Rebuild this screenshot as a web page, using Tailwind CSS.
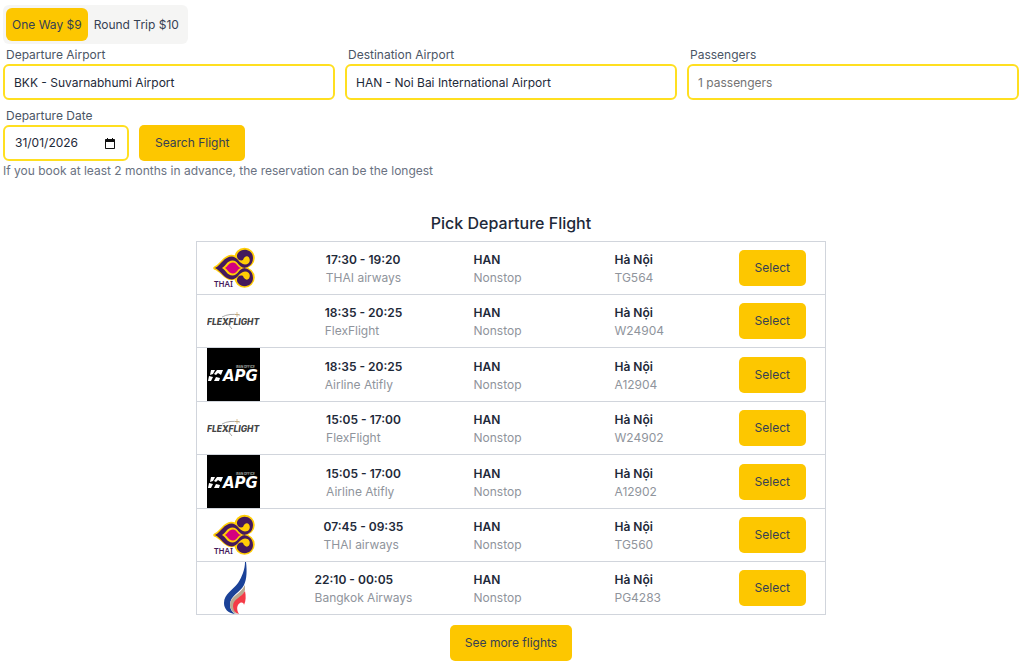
<!DOCTYPE html>
<html lang="en">
<head>
  <meta charset="UTF-8" />
  <meta name="viewport" content="width=device-width, initial-scale=1.0" />
  <title>Flight Reservation</title>
  <script src="https://cdn.jsdelivr.net/npm/@tailwindcss/browser@4"></script>
</head>
<body class="bg-white text-gray-800 font-['Inter','Liberation_Sans',sans-serif] text-[12px] leading-[18px]">

  <main class="pl-[3px] pr-[5px] pt-[5px] pb-2">
    <form id="searchForm">
      <div class="inline-flex rounded-md bg-stone-100 p-[3px] align-top">
        <button type="button" class="h-[33px] rounded-md bg-yellow-400 px-[6px] text-gray-700">One Way $9</button>
        <button type="button" class="h-[33px] rounded-md px-[6px] text-gray-700">Round Trip $10</button>
      </div>

      <div class="grid grid-cols-3 gap-[10px]">
        <div>
          <label for="from" class="block h-5 px-[3px] leading-[22px] text-gray-600">Departure Airport</label>
          <input id="from" type="text" value="BKK - Suvarnabhumi Airport" class="block h-9 w-full rounded-md border-2 border-yellow-300 px-[9px]" />
        </div>
        <div>
          <label for="to" class="block h-5 px-[3px] leading-[22px] text-gray-600">Destination Airport</label>
          <input id="to" type="text" value="HAN - Noi Bai International Airport" class="block h-9 w-full rounded-md border-2 border-yellow-300 px-[9px]" />
        </div>
        <div>
          <label for="passengers" class="block h-5 px-[3px] leading-[22px] text-gray-600">Passengers</label>
          <input id="passengers" type="text" placeholder="1 passengers" class="block h-9 w-full rounded-md border-2 border-yellow-300 px-[9px] placeholder:text-neutral-500" />
        </div>
      </div>

      <div class="mt-[5px] flex items-end gap-[10px]">
        <div>
          <label for="date" class="block h-5 px-[3px] leading-[22px] text-gray-600">Departure Date</label>
          <div class="flex h-9 w-[126px] items-center justify-between rounded-md border-2 border-yellow-300 pl-[10px] pr-3">
            <input id="date" type="text" value="31/01/2026" class="w-20 outline-none" />
            <button type="button" aria-label="Open calendar">
              <svg class="block" width="10" height="11" viewBox="0 0 10 11">
                <path d="M2 0h1v1h4V0h1v1h1.200q.8 0 .8.8v8.400q0 .8-.8.8H.8Q0 11 0 10.200V1.800Q0 1 .8 1H2zM1 4v6h8V4z" fill="#111" fill-rule="evenodd" />
              </svg>
            </button>
          </div>
        </div>
        <button type="submit" class="h-9 rounded-[5px] bg-yellow-400 px-4 text-gray-700">Search Flight</button>
      </div>
      <p class="pt-px text-gray-500">If you book at least 2 months in advance, the reservation can be the longest</p>
    </form>

    <section class="mx-auto mt-[31px] flex max-w-[630px] flex-col items-center">
      <h2 class="mb-[6px] text-[16px] leading-6 font-medium">Pick Departure Flight</h2>
      <table class="h-[374px] w-full border-collapse border border-gray-300">
        <tbody id="flights"></tbody>
      </table>
      <button type="button" class="mt-[10px] h-9 rounded-[5px] bg-yellow-400 px-[15px] text-gray-700">See more flights</button>
    </section>
  </main>

  <script>
    // airline logos
    const logos = {
      thai: `
        <svg class="block" width="53" height="52" viewBox="0 0 53 52" role="img" aria-label="THAI airways logo">
          <g fill="#ffcd05" stroke="#ffcd05" stroke-width="3.500" stroke-linejoin="round">
            <path d="M8 26C15 23 17 15 24 14.500C30 14 32 21 37 22L37 30C32 31 30 37 24 36.500C17 36 15 28 8 26z" />
            <circle cx="37.500" cy="16" r="8.500" />
            <circle cx="37.500" cy="35.500" r="8.500" />
          </g>
          <path d="M8 26C14 23 17 14.500 25 14.500C31 15 32 22 38 22.500C42 22.500 44 19 42 15.500C40 13 37 15 36 18C32 20 28 15 31 11C36 5 46 8 46 16C46 24 39 26 36 26C39 26 46 28 46 36C46 44 36 47 31 41C28 37 32 32 36 34C37 37 40 39 42 36.500C44 33 42 29.500 38 29.500C32 30 31 37 25 37.500C17 37 14 29 8 26z" fill="#44195c" />
          <path d="M15 26C19 24 20 18.500 25.500 18.500C31 18.500 31 25 38 26C31 27 31 33.500 25.500 33.500C20 33.500 19 28 15 26z" fill="#ffcd05" />
          <path d="M18 26C21 24.500 21.500 20.500 26 20.500C30 20.500 30 25 34 26C30 27 30 31.500 26 31.500C21.500 31.500 21 27.500 18 26z" fill="#d4007f" />
          <text x="7" y="44.500" font-family="Noto Sans, sans-serif" font-size="8" font-weight="600" fill="#44195c">THAI</text>
        </svg>`,
      flex: `
        <svg class="block" width="53" height="52" viewBox="0 0 53 52" role="img" aria-label="FlexFlight logo">
          <path d="M15 22Q22 18 33 20M16 23L25 34" fill="none" stroke="#aaa" stroke-width="1" />
          <path d="M30 17v5M28 19.500h4" stroke="#c9a66b" stroke-width=".7" />
          <text x="0" y="29.500" font-family="Inter, sans-serif" font-size="8.500" font-weight="800" font-style="italic" fill="#444">FLEXFLIGHT</text>
        </svg>`,
      apg: `
        <svg class="block" width="53" height="53" viewBox="0 0 53 53" role="img" aria-label="Airline Atifly logo">
          <path d="M0 0h53v53H0z" fill="#000" />
          <path d="M4 22h4l-2 4-3 1zM10 22h6l-2 5-3-2-2 2-2-1zM2 28l4 1-2 4H1zM9 29l4 1-1 3H7z" fill="#fff" />
          <text x="16" y="33" font-family="DejaVu Sans, sans-serif" font-size="15" font-weight="700" font-style="italic" fill="#fff">APG</text>
          <text x="29" y="20" font-family="Inter, sans-serif" font-size="3" font-weight="700" fill="#aaa">IRAN OFFICE</text>
        </svg>`,
      bangkok: `
        <svg class="block" width="53" height="52" viewBox="0 0 53 52" role="img" aria-label="Bangkok Airways logo">
          <path d="M38 0h1c1 8 1 17-2 23C33 31 23 33 23 43c0 4 2 7 5 9C21 51 17 47 17 41c0-9 9-13 14-20 4-6 7-14 7-21z" fill="#1b4298" />
          <path d="M38 23C34 32 23 34 23 43c0 4 3 8 7 9-3-3-4-6-3-9 2-6 9-8 11-15z" fill="#b9a990" />
          <path d="M38 29c-3 6-12 8-12 15 0 4 2 7 6 8-3-5-2-9 1-11 2-1 4 0 4 2 2-4 2-9 1-14z" fill="#f43b47" />
        </svg>`,
    };

    const flights = [
      { logo: "thai", time: "17:30 - 19:20", airline: "THAI airways", code: "TG564" },
      { logo: "flex", time: "18:35 - 20:25", airline: "FlexFlight", code: "W24904" },
      { logo: "apg", time: "18:35 - 20:25", airline: "Airline Atifly", code: "A12904" },
      { logo: "flex", time: "15:05 - 17:00", airline: "FlexFlight", code: "W24902" },
      { logo: "apg", time: "15:05 - 17:00", airline: "Airline Atifly", code: "A12902" },
      { logo: "thai", time: "07:45 - 09:35", airline: "THAI airways", code: "TG560" },
      { logo: "bangkok", time: "22:10 - 00:05", airline: "Bangkok Airways", code: "PG4283" },
    ];

    document.getElementById("flights").innerHTML = flights.map((flight) => `
      <tr class="border-t border-gray-300">
        <td class="w-[80px] p-0 pl-[10px]">${logos[flight.logo]}</td>
        <td class="w-[174px] p-0 pt-[2px] text-center">
          <div class="inline-block text-left align-middle">
            <p class="font-semibold">${flight.time}</p>
            <p class="text-[#8f949c]">${flight.airline}</p>
          </div>
        </td>
        <td class="w-[140px] p-0 pt-[2px] pl-[23px]">
          <p class="font-semibold">HAN</p>
          <p class="text-[#8f949c]">Nonstop</p>
        </td>
        <td class="p-0 pt-[2px] pl-6">
          <p class="font-semibold">Hà Nội</p>
          <p class="text-[#8f949c]">${flight.code}</p>
        </td>
        <td class="p-0 pr-[19px] text-right">
          <button type="button" class="h-9 rounded-[5px] bg-yellow-400 px-4 align-middle text-gray-700">Select</button>
        </td>
      </tr>`).join("");

    document.getElementById("searchForm").addEventListener("submit", (e) => e.preventDefault());
  </script>

</body>
</html>
